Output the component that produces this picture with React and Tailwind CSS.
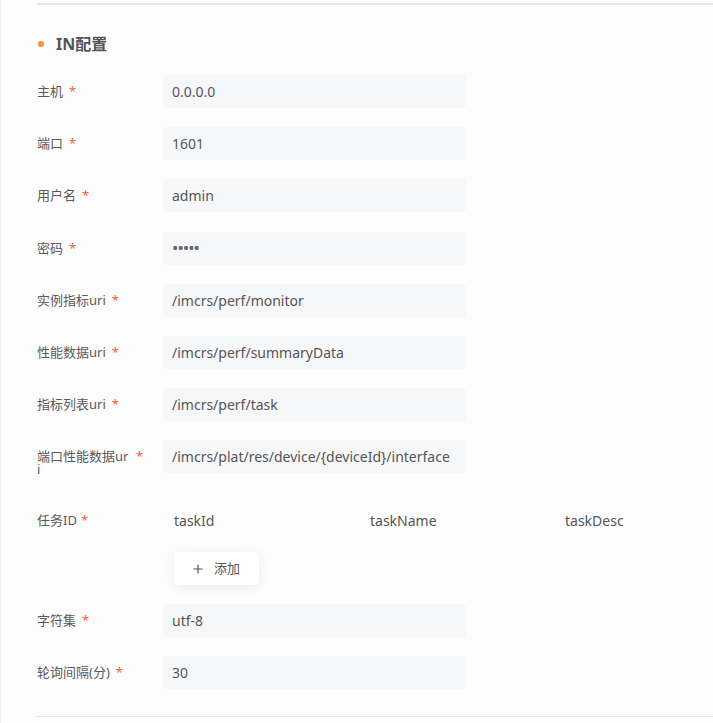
import React from "react";

const fields = [
  { label: "主机", value: "0.0.0.0" },
  { label: "端口", value: "1601" },
  { label: "用户名", value: "admin" },
  { label: "密码", value: "•••••", secret: true },
  { label: "实例指标uri", value: "/imcrs/perf/monitor" },
  { label: "性能数据uri", value: "/imcrs/perf/summaryData" },
  { label: "指标列表uri", value: "/imcrs/perf/task" },
  { label: "端口性能数据uri", value: "/imcrs/plat/res/device/{deviceId}/interface" },
];

const tail = [
  { label: "字符集", value: "utf-8" },
  { label: "轮询间隔(分)", value: "30" },
];

function Label({ text }) {
  return (
    <div className="w-[126px] shrink-0 flex items-start pt-[10px] text-[13px] leading-[13px] text-[#5a5a5a]">
      <span className="max-w-[93px] break-all">{text}</span>
      <span className="ml-[6px] text-[#f5603c]">*</span>
    </div>
  );
}

function Field({ label, value, secret }) {
  return (
    <div className="flex">
      <Label text={label} />
      <div className="w-[303px] h-[33px] rounded-[4px] bg-[#f6f7f9] flex items-center px-[9px] text-[14px] text-[#555]">
        <span className={secret ? "text-[17px] tracking-[-1px] text-[#666]" : ""}>{value}</span>
      </div>
    </div>
  );
}

export default function App() {
  return (
    <div
      className="min-h-screen bg-[#fcfcfc] border-l border-[#f0f0f0] pl-[36px] overflow-hidden"
      style={{ fontFamily: '"Noto Sans", "Noto Sans CJK SC", sans-serif' }}
    >
      <div className="mt-[3px] border-t-2 border-[#e9e9e9]">
        <div className="pt-[27px] h-[70px] flex items-start">
          <div className="flex items-center h-[24px]">
            <span className="ml-[1px] w-[6px] h-[6px] rounded-full bg-[#f5903d]" />
            <span className="ml-[12px] text-[16px] font-bold text-[#555]">IN配置</span>
          </div>
        </div>

        <div className="flex flex-col gap-[19.2px]">
          {fields.map((f) => (
            <Field key={f.label} {...f} />
          ))}
        </div>

        <div className="flex mt-[15px] mb-[19px]">
          <div className="w-[126px] shrink-0 h-[58px] flex items-center text-[13px] text-[#5a5a5a]">
            <span>任务ID</span>
            <span className="ml-[4px] text-[#f5603c]">*</span>
          </div>
          <div>
            <div className="h-[58px] grid grid-cols-[196px_196px_196px] items-center text-[14px] text-[#555]">
              <span className="pl-[11px]">taskId</span>
              <span className="pl-[11px]">taskName</span>
              <span className="pl-[10px]">taskDesc</span>
            </div>
            <button className="mt-[3px] ml-[11px] w-[85px] h-[33px] rounded-[4px] bg-white shadow-[0_2px_12px_rgba(0,0,0,0.07)] flex items-center pl-[19px] text-[13px] text-[#555]">
              <svg width="10" height="10" viewBox="0 0 10 10" className="mr-[11px]">
                <path d="M5 0.5v9M0.5 5h9" stroke="#555" strokeWidth="1.2" />
              </svg>
              添加
            </button>
          </div>
        </div>

        <div className="flex flex-col gap-[19px]">
          {tail.map((f) => (
            <Field key={f.label} {...f} />
          ))}
        </div>

        <div className="mt-[27px] border-b border-[#e6e6e6]" />
      </div>
    </div>
  );
}
